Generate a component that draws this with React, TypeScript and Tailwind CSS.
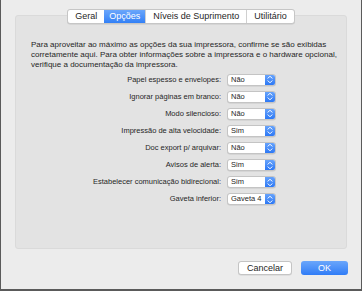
import React from 'react';

const TABS = ['Geral', 'Opções', 'Níveis de Suprimento', 'Utilitário'];

const ROWS: [string, string][] = [
  ['Papel espesso e envelopes:', 'Não'],
  ['Ignorar páginas em branco:', 'Não'],
  ['Modo silencioso:', 'Não'],
  ['Impressão de alta velocidade:', 'Sim'],
  ['Doc export p/ arquivar:', 'Não'],
  ['Avisos de alerta:', 'Sim'],
  ['Estabelecer comunicação bidirecional:', 'Sim'],
  ['Gaveta inferior:', 'Gaveta 4'],
];

function Stepper() {
  return (
    <svg width="6" height="9" viewBox="0 0 6 9" fill="none" aria-hidden="true">
      <path d="M1 3.2 L3 1.2 L5 3.2" stroke="white" strokeWidth="1" strokeLinecap="round" strokeLinejoin="round" />
      <path d="M1 5.8 L3 7.8 L5 5.8" stroke="white" strokeWidth="1" strokeLinecap="round" strokeLinejoin="round" />
    </svg>
  );
}

function PopUp({ value }: { value: string }) {
  return (
    <div className="ml-[6px] flex h-[12px] w-[49px] items-stretch overflow-hidden rounded-[3px] border border-[#c4c4c4] bg-white shadow-[0_0.5px_0.5px_rgba(0,0,0,0.12)]">
      <span className="flex flex-1 items-center whitespace-nowrap pl-[3px] text-[7.5px] leading-none text-[#262626]">{value}</span>
      <span className="flex w-[10px] shrink-0 items-center justify-center bg-gradient-to-b from-[#67a3fb] to-[#2c78f5]">
        <Stepper />
      </span>
    </div>
  );
}

export default function App() {
  return (
    <div
      className="flex h-[291px] w-[362px] flex-col border-x border-b-2 border-[#5a5a5a] bg-[#ececec] text-[#262626]"
      style={{ fontFamily: '"Liberation Sans", Arial, sans-serif' }}
    >
      <div className="mx-[14px] mt-[15px] flex h-[234px] flex-col rounded-[3px] border border-[#dadada] bg-[#e3e3e3]">
        <div className="-mt-[7px] flex justify-center">
          <div className="flex h-[15px] overflow-hidden rounded-[3px] border border-[#c6c6c6] bg-white text-[9px] leading-none shadow-[0_0.5px_0.5px_rgba(0,0,0,0.12)]">
            {TABS.map((t, i) => (
              <div
                key={t}
                className={
                  i === 1
                    ? 'flex items-center bg-gradient-to-b from-[#6aa6fb] to-[#3280f6] px-[5px] text-white'
                    : `flex items-center px-[7px] text-[#262626] ${i > 1 ? 'border-l border-[#d0d0d0]' : ''}`
                }
              >
                {t}
              </div>
            ))}
          </div>
        </div>

        <p className="mt-[16px] pl-[15px] pr-[2px] text-[8px] leading-[10px] text-[#262626]">
          Para aproveitar ao máximo as opções da sua impressora, confirme se são exibidas
          corretamente aqui. Para obter informações sobre a impressora e o hardware opcional,
          verifique a documentação da impressora.
        </p>

        <div className="mt-[1px] flex flex-col">
          {ROWS.map(([label, value]) => (
            <div key={label} className="flex h-[17.1px] items-center">
              <span className="w-[205px] whitespace-nowrap text-right text-[7.5px] leading-none text-[#262626]">
                {label}
              </span>
              <PopUp value={value} />
            </div>
          ))}
        </div>
      </div>

      <div className="mt-[12px] flex justify-end gap-[9px] pr-[13px]">
        <button
          type="button"
          className="h-[14px] w-[54px] rounded-[3px] border border-[#c4c4c4] bg-white text-[9px] leading-none text-[#262626] shadow-[0_0.5px_0.5px_rgba(0,0,0,0.12)]"
        >
          Cancelar
        </button>
        <button
          type="button"
          className="h-[14px] w-[47px] rounded-[3px] bg-gradient-to-b from-[#6aa6fb] to-[#2f7cf6] text-[9px] leading-none text-white"
        >
          OK
        </button>
      </div>
    </div>
  );
}
